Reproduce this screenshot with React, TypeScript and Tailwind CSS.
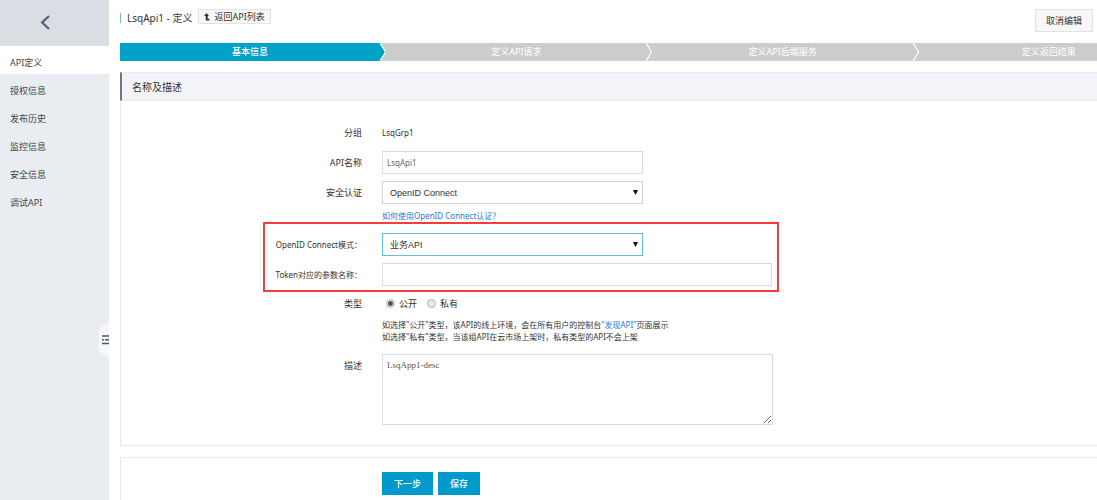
import type { ReactNode, SelectHTMLAttributes } from 'react';
import clsx from 'clsx';

const menuItems = ['API定义', '授权信息', '发布历史', '监控信息', '安全信息', '调试API'];

const steps = ['基本信息', '定义API请求', '定义API后端服务', '定义返回结果'];

const inputClasses = 'block h-[23px] w-full border border-[#d9dbdd] bg-white px-1 text-[#666] outline-none';

const Sidebar = () => (
  <aside className="relative w-[109px] shrink-0 bg-[#e9edf2]">
    <button aria-label="返回" className="flex h-[46px] w-full items-center bg-[#d9dee4] pl-10">
      <svg viewBox="0 0 10 16" className="h-4 w-2.5" fill="none" stroke="#546478" strokeWidth="2.4">
        <path d="M9 1 2.2 7.5 9 14" />
      </svg>
    </button>
    <nav>
      {menuItems.map((item, index) => (
        <a
          key={item}
          href="#"
          className={clsx('flex h-7 items-center pt-1.5 pl-2.5 text-[#444]', index === 0 && 'bg-white')}
        >
          {item}
        </a>
      ))}
    </nav>
    {/* collapse handle */}
    <button aria-label="收起菜单" className="absolute top-[322px] right-0">
      <svg viewBox="0 0 10 36" className="h-9 w-2.5">
        <path d="M10 0 1.5 5Q0 6 0 8V28Q0 30 1.5 31L10 36Z" fill="#f7f7f7" />
        <path d="M3 14H10M3 21.5H10" stroke="#4b5672" strokeWidth="1.6" />
        <path d="M3 17.7H5M6 17.7H10" stroke="#4b5672" strokeWidth="1.6" />
      </svg>
    </button>
  </aside>
);

const StepBar = () => (
  <div className="overflow-hidden">
    <ol className="flex h-[18px] w-[109%] text-white">
      {steps.map((step, index) => {
        const color = index === 0 ? '#00a2ca' : '#cccccc';
        return (
          <li key={step} className="flex flex-1">
            <span
              className={clsx(
                'flex flex-1 items-center justify-center',
                index === 0 ? 'bg-[#00a2ca] font-medium' : 'bg-[#ccc]',
              )}
            >
              {step}
            </span>
            <svg viewBox="0 0 6 18" className="h-[18px] w-1.5 overflow-visible bg-[#ccc]">
              <path d="M0 0 5.5 9 0 18Z" fill={color} />
              <path d="M0 0 5.5 9 0 18" fill="none" stroke="#fff" strokeWidth="1.2" />
            </svg>
          </li>
        );
      })}
    </ol>
  </div>
);

interface FieldProps {
  label: string;
  htmlFor?: string;
  narrow?: boolean;
  children: ReactNode;
}

const Field = ({ label, htmlFor, narrow, children }: FieldProps) => (
  <div className="flex gap-5">
    <label
      htmlFor={htmlFor}
      className={clsx(
        'h-[23px] shrink-0 text-right leading-[23px] whitespace-nowrap',
        narrow ? 'w-[97px]' : 'w-[241px] text-[9px]',
      )}
    >
      {label}
    </label>
    <div className="min-w-0 flex-1">{children}</div>
  </div>
);

interface SelectProps extends SelectHTMLAttributes<HTMLSelectElement> {
  active?: boolean;
}

const Select = ({ active, children, ...props }: SelectProps) => (
  <div className="relative max-w-[261px] text-[9px]">
    <select
      {...props}
      className={clsx(
        'block h-[23px] w-full appearance-none border bg-white px-[7px] font-[Liberation_Sans,Noto_Sans_CJK_SC,sans-serif] text-[#333] outline-none',
        active ? 'border-[#5bbfdd]' : 'border-[#d0d3d6]',
      )}
    >
      {children}
    </select>
    <svg viewBox="0 0 5 5" className="pointer-events-none absolute top-[9px] right-[5px] size-[5px]">
      <path d="M0 0H5L2.5 5Z" fill="#111" />
    </svg>
  </div>
);

const radioClasses =
  'size-[9px] appearance-none rounded-full border border-[#b5b5b5] bg-[#e8e8e8] checked:bg-[radial-gradient(circle,#555_0_2px,#e8e8e8_3px)]';

export default function App() {
  return (
    <div
      lang="zh-CN"
      className="flex min-h-screen bg-white font-[Noto_Sans,Noto_Sans_CJK_SC,sans-serif] text-[9px] leading-3 text-[#333]"
    >
      <Sidebar />
      <main className="flex min-w-0 flex-1 flex-col pl-[11px]">
        <header className="flex h-[43px] items-start pt-[9px] pr-1">
          <h1 className="mt-1 border-l border-[#7fb2e5] pl-1.5 text-[10px] leading-[10px]">LsqApi1 - 定义</h1>
          <button className="ml-1.5 flex h-[15px] items-center gap-1 border border-[#e2e2e2] bg-[#f7f7f7] px-[5px]">
            <svg viewBox="0 0 6 8" className="h-2 w-1.5">
              <path d="M2.5 0 5 3H3.7V5.8H5.5V7.5H1.7V3H0Z" fill="#333" />
            </svg>
            返回API列表
          </button>
          <button className="ml-auto h-[23px] border border-[#e2e2e2] bg-[#f7f7f7] px-2.5">取消编辑</button>
        </header>

        <StepBar />

        <section className="mt-[11px] border-b border-l border-[#e6eaf0]">
          <h2 className="-ml-px flex h-[29px] items-center border-y border-l-2 border-[#ebecf1] border-l-[#75758c] bg-[#f3f4f9] pl-2.5 text-[10px]">
            名称及描述
          </h2>
          <div className="pt-5 pb-5 text-[8px]">
            <div className="flex flex-col gap-[7px]">
              <Field label="分组">
                <span className="leading-[23px]">LsqGrp1</span>
              </Field>
              <Field label="API名称" htmlFor="api-name">
                <div className="max-w-[261px]">
                  <input id="api-name" defaultValue="LsqApi1" className={inputClasses} />
                </div>
              </Field>
              <Field label="安全认证" htmlFor="auth">
                <Select id="auth">
                  <option>OpenID Connect</option>
                </Select>
                <a href="#" className="mt-1.5 block text-[#2a78d0]">
                  如何使用OpenID Connect认证？
                </a>
              </Field>
            </div>

            <div className="ml-[142px] flex max-w-[516px] flex-col gap-[7px] border-2 border-[#fb3b3b] pt-[9px] pr-[5px] pb-1">
              <Field label="OpenID Connect模式：" htmlFor="mode" narrow>
                <Select id="mode" active>
                  <option>业务API</option>
                </Select>
              </Field>
              <Field label="Token对应的参数名称：" htmlFor="token" narrow>
                <input id="token" className={inputClasses} />
              </Field>
            </div>

            <Field label="类型">
              <div className="flex h-[23px] items-center gap-2.5 pl-1 text-[9px]">
                <label className="flex items-center gap-1">
                  <input type="radio" name="visibility" defaultChecked className={radioClasses} />
                  公开
                </label>
                <label className="flex items-center gap-1">
                  <input type="radio" name="visibility" className={radioClasses} />
                  私有
                </label>
              </div>
              <p className="mt-1">
                如选择"公开"类型，该API的线上环境，会在所有用户的控制台
                <a href="#" className="text-[#2a78d0]">
                  "发现API"
                </a>
                页面展示
              </p>
              <p>如选择"私有"类型，当该组API在云市场上架时，私有类型的API不会上架</p>
            </Field>

            <div className="mt-[11px]">
              <Field label="描述" htmlFor="desc">
                <textarea
                  id="desc"
                  defaultValue="LsqApp1-desc"
                  className="block h-[71px] w-full max-w-[391px] border border-[#d9dbdd] px-1 py-1 font-[Liberation_Serif,serif] text-[9px] text-[#555] outline-none"
                />
              </Field>
            </div>
          </div>
        </section>

        <section className="mt-[11px] flex flex-1 items-start gap-[5px] border-t border-l border-[#e6eaf0] pt-3.5 pl-[261px]">
          <button className="h-[23px] bg-[#0099cc] px-3 font-medium text-white">下一步</button>
          <button className="h-[23px] bg-[#0099cc] px-3 font-medium text-white">保存</button>
        </section>
      </main>
    </div>
  );
}
